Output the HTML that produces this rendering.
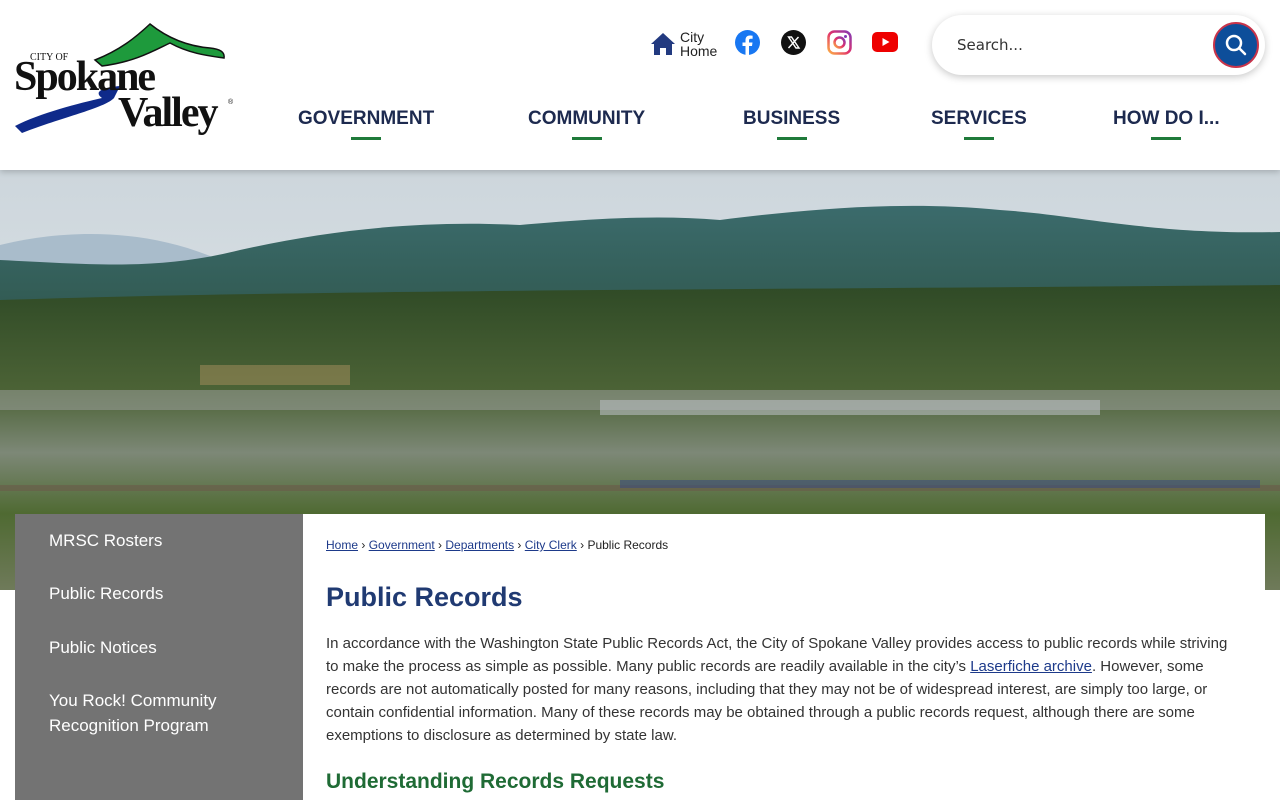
<!DOCTYPE html>
<html><head><meta charset="utf-8"><style>
*{margin:0;padding:0;box-sizing:border-box}
body{width:1280px;height:800px;overflow:hidden;background:#fff;font-family:"Liberation Sans",sans-serif;position:relative}
.hdr{position:absolute;left:0;top:0;width:1280px;height:170px;background:#fff;z-index:3;box-shadow:0 2px 6px rgba(0,0,0,.2)}
.nav a{position:absolute;top:108px;font:bold 19px "Liberation Sans",sans-serif;color:#1d2a4f;letter-spacing:0;text-decoration:none}
.nav a::after{content:"";position:absolute;left:50%;margin-left:-15px;bottom:-10px;width:30px;height:3px;background:#1f7a3a}
.hero{position:absolute;left:0;top:170px;width:1280px;height:420px;overflow:hidden}
.side{position:absolute;left:15px;top:514px;width:288px;height:286px;background:#737373;z-index:2}
.side div{position:absolute;left:34px;color:#fff;font-size:17px;line-height:25px}
.main{position:absolute;left:303px;top:514px;width:962px;height:286px;background:#fff;z-index:2}
.bc{position:absolute;left:23px;top:24px;font-size:12px;color:#222}
.bc a{color:#1d3a8a;text-decoration:underline}
h1{position:absolute;left:23px;top:68px;font:bold 27px "Liberation Sans",sans-serif;color:#203a72}
p{position:absolute;left:23px;top:118px;width:905px;font-size:15px;line-height:23px;color:#333}
p a{color:#1d3a8a}
h2{position:absolute;left:23px;top:256px;font:bold 21px "Liberation Sans",sans-serif;color:#1f6b35}
</style></head><body>
<div class="hdr">
<svg style="position:absolute;left:10px;top:18px" width="230" height="120" viewBox="0 0 230 120">
<path d="M85 42 C110 32,125 20,140 6 C155 18,175 28,200 30 C210 31,215 34,214 40 C200 38,180 36,160 25 C145 32,125 44,92 48 Z" fill="#1e9a3c" stroke="#111" stroke-width="1.5"/>
<path d="M5 108 C30 95,70 85,92 80 C85 75,88 70,110 68 L104 80 C95 90,50 100,12 115 Z" fill="#0f2a8a"/>
<text x="20" y="42" font-family="Liberation Serif" font-size="10" fill="#111">CITY OF</text>
<text x="4" y="72" font-family="Liberation Serif" font-weight="bold" font-size="42" fill="#111" letter-spacing="-2">Spokane</text>
<text x="108" y="108" font-family="Liberation Serif" font-weight="bold" font-size="42" fill="#111" letter-spacing="-2">Valley</text>
<text x="218" y="86" font-size="7" fill="#111">®</text>
</svg>
<svg style="position:absolute;left:650px;top:32px" width="26" height="24" viewBox="0 0 26 24"><path d="M13 1 L1 12 H4 V23 H10 V16 H16 V23 H22 V12 H25 Z" fill="#223a80"/></svg>
<div style="position:absolute;left:680px;top:30px;font-size:14px;line-height:14px;color:#222">City<br>Home</div>
<svg style="position:absolute;left:735px;top:30px" width="25" height="25"><circle cx="12.5" cy="12.5" r="12.5" fill="#1877f2"/><path d="M14 25V16h3l.5-3.5H14v-2c0-1 .4-1.7 1.8-1.7h1.8V5.7c-.3 0-1.4-.2-2.7-.2-2.6 0-4.4 1.6-4.4 4.5v2.5H7.5V16h3v9z" fill="#fff"/></svg>
<svg style="position:absolute;left:781px;top:30px" width="25" height="25"><circle cx="12.5" cy="12.5" r="12.5" fill="#111"/><path d="M7.5 7h3l7.5 11h-3z M17.5 7l-10 11" stroke="#fff" stroke-width="1.4" fill="none"/></svg>
<svg style="position:absolute;left:827px;top:30px" width="25" height="25"><defs><linearGradient id="ig" x1="0" y1="1" x2="1" y2="0"><stop offset="0" stop-color="#fcaf45"/><stop offset=".5" stop-color="#e1306c"/><stop offset="1" stop-color="#833ab4"/></linearGradient></defs><rect x="1.5" y="1.5" width="22" height="22" rx="6" fill="none" stroke="url(#ig)" stroke-width="2.5"/><circle cx="12.5" cy="12.5" r="5" fill="none" stroke="url(#ig)" stroke-width="2.5"/><circle cx="18.5" cy="6.5" r="1.5" fill="#833ab4"/></svg>
<svg style="position:absolute;left:872px;top:32px" width="26" height="20"><rect width="26" height="20" rx="5" fill="#e00"/><path d="M10.5 6v8l7-4z" fill="#fff"/></svg>
<div style="position:absolute;left:932px;top:15px;width:333px;height:60px;border-radius:30px;background:#fff;box-shadow:0 2px 8px rgba(0,0,0,.22)">
<span style="position:absolute;left:25px;top:21px;font:15px 'DejaVu Sans',sans-serif;color:#333">Search...</span>
<div style="position:absolute;left:281px;top:7px;width:46px;height:46px;border-radius:50%;background:#0d4e9a;border:2px solid #c8344a">
<svg width="42" height="42" viewBox="0 0 42 42"><circle cx="19" cy="19" r="7" fill="none" stroke="#fff" stroke-width="2.5"/><path d="M24 24l6 6" stroke="#fff" stroke-width="2.5" stroke-linecap="round"/></svg></div></div>
<div class="nav"><a style="left:298px">GOVERNMENT</a><a style="left:528px">COMMUNITY</a><a style="left:743px">BUSINESS</a><a style="left:931px">SERVICES</a><a style="left:1113px">HOW DO I...</a></div>
</div>
<div class="hero"><svg width="1280" height="420" viewBox="0 0 1280 420">
<defs><linearGradient id="sky" x1="0" y1="0" x2="0" y2="1"><stop offset="0" stop-color="#cdd6dc"/><stop offset="1" stop-color="#e6ebee"/></linearGradient>
<linearGradient id="mt" x1="0" y1="0" x2="0" y2="1"><stop offset="0" stop-color="#3b6b6c"/><stop offset="1" stop-color="#2e5448"/></linearGradient>
<linearGradient id="tw" x1="0" y1="0" x2="0" y2="1"><stop offset="0" stop-color="#2f4a26"/><stop offset=".35" stop-color="#4c6336"/><stop offset=".55" stop-color="#7d8877"/><stop offset=".75" stop-color="#4f6a32"/><stop offset="1" stop-color="#6f7a5a"/></linearGradient></defs>
<rect width="1280" height="420" fill="url(#sky)"/>
<path d="M0 75 C60 60,150 55,230 95 L0 100Z" fill="#a9bccb"/>
<path d="M0 90 C100 95,160 100,240 80 C330 60,420 50,520 55 C600 48,660 45,720 50 C800 40,900 30,1000 40 C1080 45,1150 65,1280 62 V180 H0Z" fill="url(#mt)"/>
<path d="M0 130 C300 120,700 120,1280 115 V420 H0Z" fill="url(#tw)"/>
<rect y="220" width="1280" height="20" fill="#9a9e9a" opacity=".55"/>
<rect x="600" y="230" width="500" height="15" fill="#b8bcbf" opacity=".6"/>
<rect x="200" y="195" width="150" height="20" fill="#a88f5e" opacity=".5"/>
<rect y="315" width="1280" height="6" fill="#6b5a4a" opacity=".6"/>
<rect x="620" y="310" width="640" height="8" fill="#3e4d7a" opacity=".6"/>
</svg></div>
<div class="side"><div style="top:14px">MRSC Rosters</div><div style="top:67px">Public Records</div><div style="top:121px">Public Notices</div><div style="top:174px">You Rock! Community<br>Recognition Program</div></div>
<div class="main">
<div class="bc"><a>Home</a> › <a>Government</a> › <a>Departments</a> › <a>City Clerk</a> › Public Records</div>
<h1>Public Records</h1>
<p>In accordance with the Washington State Public Records Act, the City of Spokane Valley provides access to public records while striving to make the process as simple as possible. Many public records are readily available in the city’s <a href="#">Laserfiche archive</a>. However, some records are not automatically posted for many reasons, including that they may not be of widespread interest, are simply too large, or contain confidential information. Many of these records may be obtained through a public records request, although there are some exemptions to disclosure as determined by state law.</p>
<h2>Understanding Records Requests</h2>
</div>
</body></html>
